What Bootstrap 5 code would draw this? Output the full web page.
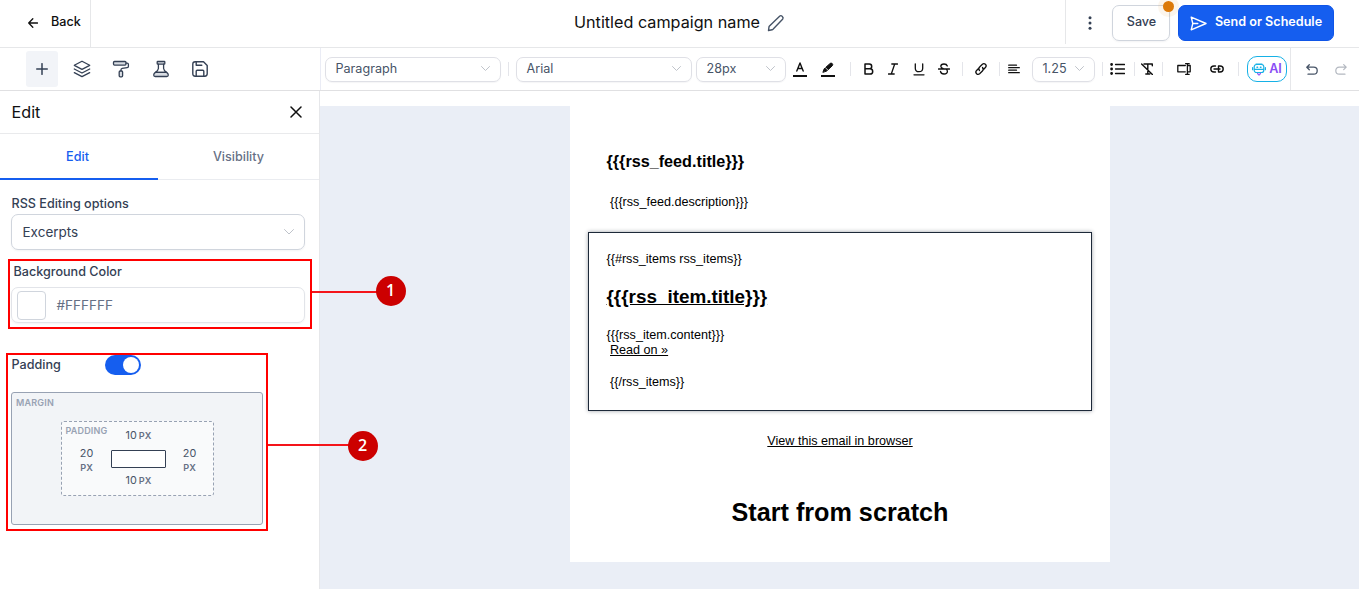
<!DOCTYPE html>
<html lang="en">
<head>
<meta charset="utf-8">
<title>Campaign editor</title>
<meta name="viewport" content="width=device-width, initial-scale=1">
<link href="https://cdn.jsdelivr.net/npm/bootstrap@5.3.0/dist/css/bootstrap.min.css" rel="stylesheet">
<style>
body{font-family:Inter,"Liberation Sans",sans-serif;font-size:12.6px;line-height:18px;color:#344054;height:589px;overflow:hidden;background:#fff}
svg{display:block;fill:none;stroke:currentColor;stroke-linecap:round;stroke-linejoin:round;flex:none}
.topbar{height:48px;border-bottom:1px solid #e6e7e9}
.backlink{width:91px;height:47px;border-right:1px solid #e6e7e9;color:#101010;font-weight:500;padding:0 0 4px 28px;gap:13px}
.backlink svg{margin-top:3px}
.campaign{font-size:16.2px;color:#101010;gap:7px;padding:0 0 3px 203px}
.campaign svg{color:#475467;margin-top:2px}
.actions{width:294px;height:44px;border-left:1px solid #e6e7e9}
.kebab{width:46px;padding:2px 0 0 1px}
.kebab svg{fill:#344054;stroke:none}
.savebtn{width:58px;height:36px;margin-top:1px;border:1px solid #d0d5dd;border-radius:7px;font-size:12.6px;font-weight:500;color:#344054;box-shadow:0 1px 2px #1018280d;padding:0 0 1px 1px}
.unsaved{width:11px;height:11px;background:#dc7a0a;top:-5px;right:-5px;box-shadow:0 0 0 5px #dc7a0a14}
.sendbtn{width:156px;height:36px;margin-left:8px;margin-top:1px;border:1px solid #0f55e8;border-radius:7px;background:#155eef;color:#fff;font-size:12.6px;font-weight:600;padding:0 0 1px;gap:8px}
.sendbtn svg{margin-top:2px}
.tools{height:43px;border-bottom:1px solid #e0e0e2}
.tools-left{width:320px;padding-left:26px;gap:7.4px}
.tool{width:32px;height:36px;color:#344054}
.tool.on{background:#f2f4f8;border-radius:3px;margin-right:.6px}
.tools-right{height:42px;border-left:1px solid #eaecf5;color:#101010;display:grid;align-items:center;justify-items:center;padding-left:4px;
grid-template-columns:176px 15px 176px 4px 90px 28px 28px 17px 20px 28px 24px 26px 11px 26px 10px 20px 8px 63px 14px 17px 9px 24px 7px 36px 29px 15px 41px 4px 42px 16px}
.picker{width:100%;height:25px;border:1px solid #dfe0e6;border-radius:7px;font-size:12.6px;color:#475467;padding:0 10px 1px 9.500px;box-shadow:0 1px 1px #1018280a}
.picker svg,.chev{color:#bfc3ca}
.divline{width:1px;height:14px;background:#e4e5ea}
.fullline{width:1px;height:42px;background:#e6e7ea;justify-self:end}
.aibtn{width:40px;height:26px;border:1px solid #16b1e6;border-radius:10px;gap:3px;font-size:12.6px;font-weight:600;color:#8a4df5;justify-self:end}
.aibtn svg{color:#16b1e6}
.undo{color:#475467}
.redo{color:#b3b8c0}
.editor{height:498px}
.side{width:320px;border-right:1px solid #e6e7ea}
.side-head{height:43px;border-bottom:1px solid #e9eaec;font-size:16.2px;color:#101010;padding:0 17px 0 11.500px}
.side-tabs{height:46px;border-bottom:1px solid #eaecf0;font-weight:500;color:#667085}
.side-tabs a{color:inherit;text-decoration:none;text-align:center;padding:14px 0 0;height:46px}
.side-tabs a.on{width:158px;color:#155eef;border-bottom:2px solid #155eef;padding-right:3px}
.field{height:36px;width:294px;border:1px solid #d0d5dd;border-radius:7px;font-size:13.500px;box-shadow:0 1px 2px #1018280d}
.side-body{padding:15px 0 0 11px}
.lab{font-weight:450;padding-left:.5px;height:19px}
.swatch{width:29px;height:29px;border:1px solid #d0d5dd;border-radius:4px;background:#fff}
.toggler{width:36px;height:20px;border-radius:10px;background:#155eef;padding:2px;margin-top:-1px}
.toggler i{width:16px;height:16px;border-radius:50%;background:#fff}
.marginbox{width:252px;height:133px;border:1px solid #98a2b3;border-radius:3px;background:#f2f4f7;font-size:9px;font-weight:600;color:#98a2b3;padding:4px;line-height:12px;letter-spacing:.2px}
.padbox{width:153px;height:75px;margin:12px 0 0 45px;border:1px dashed #98a2b3;border-radius:3px;background:#f9fafb;display:grid;grid-template-columns:49px 55px 47px;grid-template-rows:28px 18px 27px;justify-items:center;align-items:center}
.val{font-size:10.800px;font-weight:400;color:#475467;letter-spacing:0;line-height:14px;word-spacing:-1px}
.val small{font-size:9.200px;font-weight:600;color:#667085}
.inner{width:55px;height:18px;border:1px solid #344054;border-radius:1px;background:#fff}
.stage{background:#eaeef6;border-top:15px solid #fff}
.email{width:540px;height:456px;margin-right:-1px;background:#fff;color:#000;font:12.6px/15px "Liberation Sans",Arial,sans-serif;padding:45px 18px 0}
.email a{color:#000}
.t16{font-size:16.2px;line-height:20px;font-weight:700}
.t19{font-size:18.9px;line-height:24px;font-weight:700}
.t25{font-size:25.2px;line-height:30px;font-weight:700}
.rss{height:179px;border:1px solid #1d2939;box-shadow:0 0 4px #1018286b;padding:19px 17.500px 0;margin-top:22px}
.note{position:absolute;border:2px solid #f00}
.wire{position:absolute;height:2px;background:#f4141a}
.pin{position:absolute;width:30px;height:30px;border-radius:50%;background:#c00;color:#fff;font:600 16px/29px "Open Sans",sans-serif;text-align:center}
</style>
</head>
<body class="position-relative">
<header class="topbar d-flex position-relative">
  <a class="backlink d-flex align-items-center text-decoration-none" href="#">
    <svg width="10" height="10" viewBox="0 0 10 10" stroke-width="1.3"><path d="M9.5 5H.7M4.8.8.7 5l4.1 4.2"/></svg>Back</a>
  <div class="campaign flex-grow-1 d-flex align-items-center justify-content-center"><span>Untitled campaign name</span>
    <svg width="18" height="18" viewBox="0 0 18 18" stroke-width="1.4"><path d="M1.500 16.500l.5-3.700q.1-.5.500-.9L12.600 2.200c1.700-1.600 4.600 1.100 3 3L6 15.300q-.4.400-.9.500z"/></svg></div>
  <div class="actions d-flex align-items-center">
    <div class="kebab d-flex justify-content-center"><svg width="4" height="16" viewBox="0 0 4 16"><circle cx="2" cy="2.7" r="1.5"/><circle cx="2" cy="8" r="1.5"/><circle cx="2" cy="13.3" r="1.5"/></svg></div>
    <button class="btn savebtn position-relative">Save<span class="unsaved position-absolute rounded-circle"></span></button>
    <button class="btn sendbtn d-flex align-items-center justify-content-center"><svg width="17" height="15" viewBox="0 0 17 15" stroke-width="1.4"><path d="M1.2 1.2 16 7.5 1.2 13.8l1.6-6.3zM2.800 7.500h5"/></svg>Send or Schedule</button>
  </div>
</header>

<div class="tools d-flex">
  <div class="tools-left d-flex align-items-center">
    <div class="tool on d-flex align-items-center justify-content-center"><svg width="12" height="12" viewBox="0 0 12 12" stroke-width="1.5"><path d="M6 .7v10.6M.7 6h10.6"/></svg></div>
    <div class="tool d-flex align-items-center justify-content-center"><svg width="18" height="18" viewBox="0 0 18 18" stroke-width="1.3"><path d="M9 1.2 1.3 5.3 9 9.3l7.700-4zM1.300 9 9 13l7.700-4M1.300 12.700l7.700 4 7.700-4"/></svg></div>
    <div class="tool d-flex align-items-center justify-content-center"><svg width="18" height="18" viewBox="0 0 18 18" stroke-width="1.300"><rect x="1.500" y="1.500" width="12.500" height="3.600" rx="1" fill="#d9dde3"/><path d="M14 3.200h1.200q1.200 0 1.200 1.200v2q0 1-1.200 1.200l-5 .8q-1.200.2-1.200 1.300v1.300"/><rect x="7.200" y="11" width="3.400" height="5.800" rx="1" fill="#d9dde3"/></svg></div>
    <div class="tool d-flex align-items-center justify-content-center"><svg width="18" height="18" viewBox="0 0 18 18" stroke-width="1.300"><rect x="5.200" y="1.500" width="7.600" height="2.700" rx=".6" fill="#d9dde3"/><path d="M6.400 4.200v4.300q-.3 2.300-3 3.900h11.200q-2.700-1.600-3-3.900V4.200"/><path d="M3.400 12.400q-1.700 1-1.700 2.600 0 1.500 1.500 1.500h11.600q1.500 0 1.500-1.500 0-1.600-1.700-2.600z" fill="#d9dde3"/></svg></div>
    <div class="tool d-flex align-items-center justify-content-center"><svg width="18" height="18" viewBox="0 0 18 18" stroke-width="1.400"><path d="M1.800 4.200q0-2.400 2.400-2.400h8.300l3.700 3.700v8.300q0 2.400-2.400 2.400H4.200q-2.400 0-2.400-2.400zM5.200 1.800v3.400h5.600M5.200 16v-4.800q0-1 1-1h5.600q1 0 1 1V16"/></svg></div>
  </div>
  <div class="tools-right flex-grow-1">
    <div class="picker d-flex align-items-center justify-content-between">Paragraph<svg width="9" height="5" viewBox="0 0 9 5"><path d="M.5.5l4 4 4-4"/></svg></div>
    <i class="divline"></i>
    <div class="picker d-flex align-items-center justify-content-between">Arial<svg width="9" height="5" viewBox="0 0 9 5"><path d="M.5.5l4 4 4-4"/></svg></div>
    <i></i>
    <div class="picker d-flex align-items-center justify-content-between">28px<svg width="9" height="5" viewBox="0 0 9 5"><path d="M.5.5l4 4 4-4"/></svg></div>
    <svg width="14" height="16" viewBox="0 0 14 16" stroke-width="1.400"><path d="M3.800 10 7 2l3.200 8M4.900 7.500h4.200"/><path d="M0 15h14" stroke-width="2" stroke-linecap="butt"/></svg>
    <svg width="14" height="16" viewBox="0 0 14 16"><path d="M2 11l1.200-3.200L8.500 3q1.500-1.700 2.700-.5t-.2 2.500L6 9.800z" fill="#101010" stroke-width="1"/><path d="M4.500 6.800l2.400 2.300" stroke="#fff" stroke-width=".8"/><path d="M0 15h14" stroke-width="2" stroke-linecap="butt"/></svg>
    <i class="divline"></i>
    <svg width="10" height="12" viewBox="0 0 10 12" stroke-width="1.500"><path d="M1 1h4.300q2.400 0 2.400 2.400T5.300 5.800H1zM1 5.800h5q2.700 0 2.700 2.600T6 11H1z"/></svg>
    <svg width="10" height="12" viewBox="0 0 10 12" stroke-width="1.300"><path d="M3.800 1h5.700M.5 11h5.700M6.700 1 3.300 11"/></svg>
    <svg width="12" height="13" viewBox="0 0 12 13" stroke-width="1.300"><path d="M2.300.8v4.400q0 3.500 3.700 3.500t3.700-3.500V.8M1 11.800h10"/></svg>
    <svg width="12" height="12" viewBox="0 0 12 12" stroke-width="1.300"><path d="M9.300 3Q8.700 1 6 1 2.800 1 2.800 3.300 2.800 5 5.300 5.700M.5 6h11M2.500 8.500q.5 2.500 3.500 2.500 3.400 0 3.400-2.700Q9.400 7 8.300 6.200"/></svg>
    <i class="divline"></i>
    <svg width="14" height="14" viewBox="0 0 14 14" stroke-width="1.300"><path d="M5.500 8.500Q4 6.500 5.600 5l2.800-2.800q1.500-1.300 3 .1t.2 3L10 7M8.500 5.500Q10 7.500 8.400 9l-2.800 2.800q-1.500 1.300-3-.1t-.2-3L4 7"/></svg>
    <i class="divline"></i>
    <svg width="12" height="10" viewBox="0 0 12 10" stroke-width="1.300"><path d="M.7 1.200h7.800M.7 3.700h10.600M.7 6.200h7.800M.7 8.700h10.600"/></svg>
    <i></i>
    <div class="picker d-flex align-items-center justify-content-between">1.25<svg width="9" height="5" viewBox="0 0 9 5"><path d="M.5.5l4 4 4-4"/></svg></div>
    <i class="divline"></i>
    <svg width="15" height="12" viewBox="0 0 15 12" stroke-width="1.300"><path d="M5.500 1.500h9M5.500 6h9M5.500 10.500h9"/><path d="M1.600 1.500h.01M1.600 6h.01M1.600 10.500h.01" stroke-width="2.800"/></svg>
    <i class="divline" style="justify-self:end"></i>
    <svg width="12" height="12" viewBox="0 0 12 12" stroke-width="1.400"><path d="M3 1h8.300v1.800M6.800 1v9.800M4.800 11h4M.6 1l10.800 10.500"/></svg>
    <i class="divline"></i>
    <svg width="14" height="12" viewBox="0 0 14 12" stroke-width="1.300"><path d="M8.300 2.500H.8v6.300h7.500M10.500 2.500h2.700v6.300h-2.700M8.600.7h3.600M8.600 11.300h3.600M10.400.7v10.600"/></svg>
    <svg width="14" height="10" viewBox="0 0 14 10" stroke-width="1.400"><path d="M5.500 8H4Q.8 8 .8 5T4 2h1.500M8.500 2H10q3.200 0 3.200 3T10 8H8.500M4 5h6M8.500 2v6"/></svg>
    <i class="divline"></i>
    <div class="aibtn d-flex align-items-center justify-content-center"><svg width="14" height="13" viewBox="0 0 14 13" stroke-width="1.200"><rect x="2.200" y="1.500" width="9.600" height="8" rx="2.300"/><path d="M.6 4.500v2.200M13.400 4.500v2.200M4 1h6M2.500 6.400h9"/><path d="M5 4.300h.6M8.400 4.300H9" stroke-width="1.400"/><path d="M5.500 10.500 7 12l1.500-1.500" stroke="#9b5cf6"/></svg>AI</div>
    <i class="fullline"></i>
    <svg class="undo" width="12" height="11" viewBox="0 0 12 11" stroke-width="1.300"><path d="M3.300.7.8 3.200l2.500 2.500M1 3.200h6.700Q11.200 3.200 11.200 6.700T7.700 10.200H2"/></svg>
    <svg class="redo" width="12" height="11" viewBox="0 0 12 11" stroke-width="1.200"><path d="M8.700.7l2.500 2.500-2.500 2.500M11 3.200H4.300Q.8 3.200.8 6.700t3.500 3.500H10"/></svg>
  </div>
</div>

<main class="editor d-flex">
  <aside class="side">
    <div class="side-head d-flex align-items-center justify-content-between">Edit
      <svg width="12" height="12" viewBox="0 0 12 12" stroke-width="1.500"><path d="M1 1l10 10M11 1 1 11"/></svg></div>
    <nav class="side-tabs d-flex"><a class="on" href="#">Edit</a><a class="flex-grow-1" href="#">Visibility</a></nav>
    <div class="side-body">
      <div class="lab">RSS Editing options</div>
      <div class="field d-flex align-items-center justify-content-between" style="padding:0 10px 0 10.500px">Excerpts<svg class="chev" width="10" height="6" viewBox="0 0 10 6"><path d="M.5.500l4.500 4.500L9.500.500"/></svg></div>
      <div class="lab" style="margin:13px 0 0 2px;height:24px">Background Color</div>
      <div class="field d-flex align-items-center" style="padding-left:5px;gap:10.500px;border-color:#e2e4e9;color:#667085"><span class="swatch"></span>#FFFFFF</div>
      <div class="d-flex" style="margin-top:33px;height:36px"><div class="lab" style="width:94px">Padding</div><div class="toggler d-flex justify-content-end"><i></i></div></div>
      <div class="marginbox">MARGIN
        <div class="padbox">
          <span class="align-self-start" style="padding:3px 0 0">PADDING</span><div class="val">10 <small>PX</small></div><i></i>
          <div class="val text-center" style="margin-top:4px">20<br><small>PX</small></div><div class="inner"></div><div class="val text-center" style="margin-top:4px">20<br><small>PX</small></div>
          <i></i><div class="val" style="margin-top:-2px">10 <small>PX</small></div><i></i>
        </div>
      </div>
    </div>
  </aside>
  <section class="stage flex-grow-1 d-flex justify-content-center">
    <article class="email">
      <div style="padding-left:18.500px">
        <div class="t16">{{{rss_feed.title}}}</div>
        <div style="margin-top:24px;padding-left:3.500px">{{{rss_feed.description}}}</div>
      </div>
      <div class="rss">
        <div>{{#rss_items rss_items}}</div>
        <div class="t19 text-decoration-underline" style="margin-top:18px">{{{rss_item.title}}}</div>
        <div style="margin-top:19px">{{{rss_item.content}}}</div>
        <div style="padding-left:3.500px"><a href="#">Read on »</a></div>
        <div style="margin-top:17px;padding-left:3.500px">{{/rss_items}}</div>
      </div>
      <div class="text-center" style="margin-top:23px"><a href="#">View this email in browser</a></div>
      <div class="t25 text-center" style="margin-top:48px">Start from scratch</div>
    </article>
  </section>
</main>

<!-- numbered callouts over the panel -->
<div class="note" style="left:8px;top:259px;width:304px;height:70px"></div>
<div class="wire" style="left:312px;top:291px;width:66px"></div>
<div class="pin" style="left:375.500px;top:275.500px">1</div>
<div class="note" style="left:6px;top:353px;width:262px;height:178px"></div>
<div class="wire" style="left:268px;top:444px;width:82px"></div>
<div class="pin" style="left:347.500px;top:430.500px">2</div>
<script src="https://cdn.jsdelivr.net/npm/bootstrap@5.3.0/dist/js/bootstrap.bundle.min.js"></script>
</body>
</html>
